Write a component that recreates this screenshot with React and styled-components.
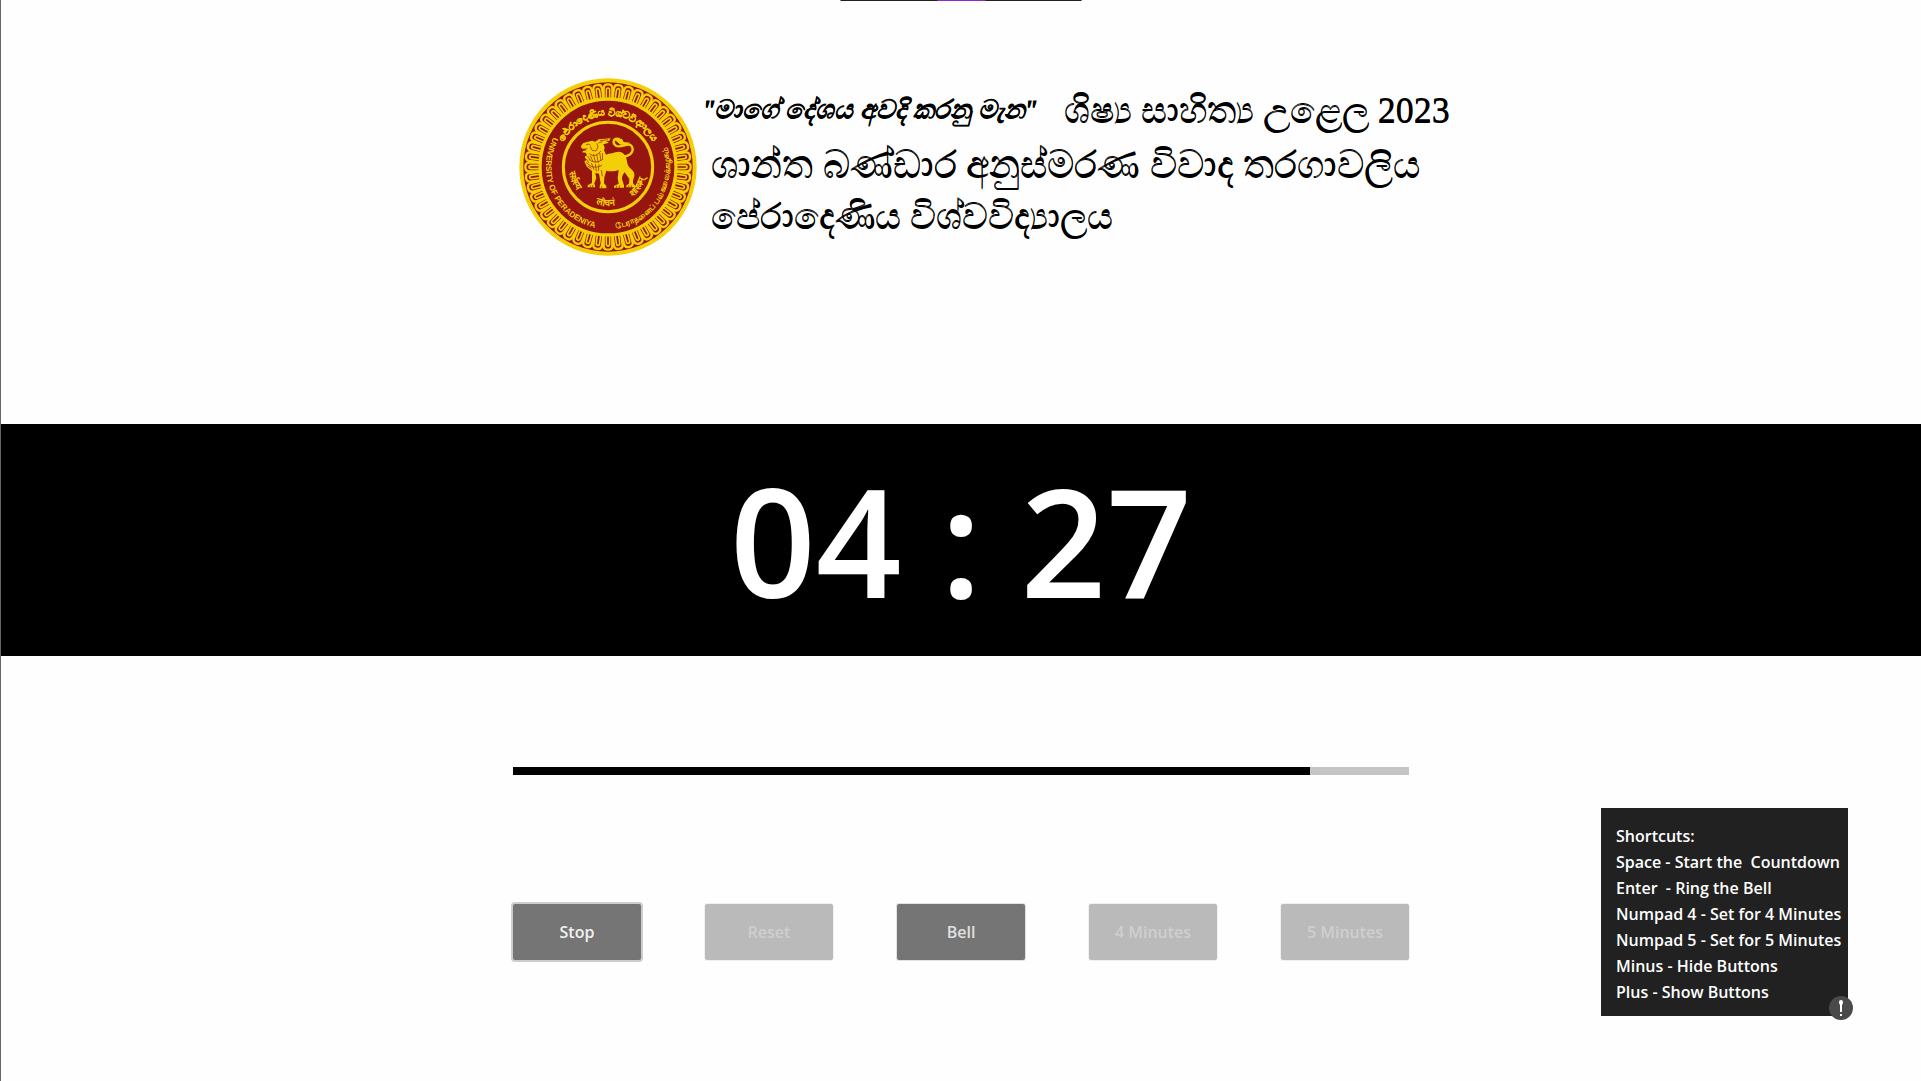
import React from "react";
import styled, { createGlobalStyle } from "styled-components";

const YELLOW = "#f4cf08";
const RED = "#96150f";

const GlobalStyle = createGlobalStyle`
  *, *::before, *::after { box-sizing: border-box; }
  body {
    margin: 0;
    background: #fefefe;
    font-family: "Open Sans", "Noto Sans", sans-serif;
  }
`;

const Page = styled.main`
  position: relative;
  display: flex;
  flex-direction: column;
  min-height: 100vh;
  border-left: 1px solid #666;
  overflow-x: hidden;
`;

const TopStrip = styled.div`
  position: absolute;
  top: 0;
  left: 50%;
  display: flex;
  justify-content: center;
  width: 241px;
  height: 1px;
  transform: translateX(-50%);
  background: #212121;
`;

const StripHandle = styled.span`
  width: 48px;
  background: #8a2bd2;
`;

const Column = styled.div`
  width: 100%;
  max-width: 896px;
  margin: 0 auto;
`;

const Header = styled.header`
  min-height: 424px;
  padding-top: 76px;
`;

const Brand = styled(Column)`
  display: flex;
  gap: 4px;
  padding-left: 4px;
`;

const Emblem = styled.svg`
  flex: none;
  width: 182px;
  height: 182px;
`;

const Titles = styled.div`
  display: flex;
  flex-direction: column;
  padding-top: 6px;
  color: #000;
  font-family: "Liberation Serif", serif;
  white-space: nowrap;
`;

const TitleRow = styled.div`
  display: flex;
  gap: 28px;
  height: ${(p) => (p.$tall ? 56 : 52)}px;
  padding-left: ${(p) => (p.$indent ? 8 : 0)}px;
  line-height: ${(p) => (p.$tall ? 56 : 52)}px;
`;

const TitleText = styled.h1`
  margin: 0;
  font-size: ${(p) => p.$size}px;
  font-weight: 400;
  text-shadow: 0 1px 0 #000;
`;

const Motto = styled(TitleText)`
  font-style: italic;
  -webkit-text-stroke: 1px #000;
`;

const ClockBand = styled.section`
  display: flex;
  align-items: center;
  justify-content: center;
  min-height: 232px;
  background: #000;
`;

const Clock = styled.time`
  color: #fff;
  font-size: 150px;
  font-weight: 600;
  line-height: 208px;
  white-space: pre;
`;

const Controls = styled(Column)`
  display: flex;
  flex-direction: column;
  gap: 129px;
  padding: 111px 0 121px;
`;

const Track = styled.div`
  height: 8px;
  background: #c5c5c5;
`;

const Elapsed = styled.div`
  height: 100%;
  background: #000;
`;

const ButtonRow = styled.div`
  display: grid;
  grid-template-columns: repeat(5, 1fr);
  gap: 64px;
`;

const ActionButton = styled.button`
  height: 56px;
  padding: 0;
  border: 0;
  border-radius: 2px;
  background: #757575;
  box-shadow: 0 0 0 ${(p) => (p.$current ? "2px #cdcdcd" : "1px #e2e2e2")};
  color: ${(p) => (p.$current ? "#f2f2f2" : "#e0e0e0")};
  font: 600 16px/24px "Open Sans", "Noto Sans", sans-serif;

  &:disabled {
    background: #bababa;
    box-shadow: 0 0 0 1px #f0f0f0;
    color: #cfcfcf;
  }
`;

const ShortcutPanel = styled.aside`
  position: fixed;
  right: 73px;
  bottom: 65px;
  width: 247px;
  padding: 15px 0 11px 15px;
  background: #212121;
  color: #fff;
  font-size: 16px;
  font-weight: 600;
  line-height: 26px;
  white-space: pre;
`;

const ShortcutTitle = styled.h2`
  margin: 0;
  font: inherit;
`;

const ShortcutList = styled.ul`
  margin: 0;
  padding: 0;
  list-style: none;
`;

const InfoButton = styled.button`
  position: absolute;
  right: -5px;
  bottom: -4px;
  width: 24px;
  height: 24px;
  padding: 0;
  border: 0;
  border-radius: 50%;
  background: #4a4a4a;
`;

const InfoIcon = styled.svg`
  display: block;
  width: 24px;
  height: 24px;
`;

const PETALS = Array.from({ length: 48 }, (_, i) => i * 7.5);

function UniversityEmblem() {
  return (
    <Emblem viewBox="21 17 546 546" role="img" aria-label="University of Peradeniya">
      <defs>
        <path id="ringTop" d="M140 290A154 154 0 0 1 448 290" />
        <path id="ringOuter" d="M294 104A186 186 0 0 0 294 476A186 186 0 0 0 294 104" />
        <path id="ringInner" d="M294 173A117 117 0 0 0 294 407A117 117 0 0 0 294 173" />
      </defs>
      <circle cx="294" cy="290" r="266" fill={YELLOW} />
      <circle cx="294" cy="290" r="254" fill={RED} />
      <g fill="none" stroke={YELLOW} strokeLinecap="round">
        {PETALS.map((angle) => (
          <g key={angle} transform={`rotate(${angle} 294 290)`}>
            <path d="M281 82V54Q281 42 294 42Q307 42 307 54V82" strokeWidth="7" />
            <path d="M289 80V59Q289 53 294 53Q299 53 299 59V80" strokeWidth="5" />
          </g>
        ))}
      </g>
      <circle cx="294" cy="290" r="204" fill={RED} stroke={YELLOW} strokeWidth="10" />
      <circle cx="294" cy="290" r="134" fill="none" stroke={YELLOW} strokeWidth="9" />
      <g fill={YELLOW} fontWeight="700">
        <g stroke={YELLOW} strokeWidth="1">
          <text fontFamily="'Liberation Serif', serif" fontSize="29">
            <textPath href="#ringTop" startOffset="50%" textAnchor="middle">
              පේරාදෙණිය විශ්වවිද්‍යාලය
            </textPath>
          </text>
        </g>
        <text fontFamily="'Liberation Sans Narrow', 'Liberation Sans', sans-serif" fontSize="24">
          <textPath href="#ringOuter" startOffset="17%">UNIVERSITY OF PERADENIYA</textPath>
        </text>
        <text fontFamily="'Liberation Sans', sans-serif" fontSize="24">
          <textPath href="#ringOuter" startOffset="52%">பேராதனைப் பல்கலைக்கழகம்</textPath>
        </text>
        <g fontFamily="'Liberation Sans', sans-serif" fontSize="28">
          <text><textPath href="#ringInner" startOffset="27%">सर्वस्य</textPath></text>
          <text><textPath href="#ringInner" startOffset="45%">लोचनं</textPath></text>
          <text><textPath href="#ringInner" startOffset="61%">शास्त्रम्</textPath></text>
        </g>
      </g>
      <g transform="translate(186 180)">
        <g fill={YELLOW}>
          <path d="M29 44L34 38L48 34L60 31L70 34L80 27L116 24L112 31L102 33L111 37L94 42L98 52L96 60L102 73C112 69 121 70 130 66C142 61 155 66 161 78C166 90 164 101 172 111C180 120 189 124 187 137C185 146 181 153 184 161L190 166V171H163V165L171 160L172 146L158 126C152 132 148 142 151 150L156 165V172H126V167L140 160L137 143L140 119C129 124 114 124 103 121L97 141L96 159L103 167V174H83V168L86 158L81 130L70 128L73 143L67 159L70 171H47V165L60 158V122L45 110L37 94L43 88L38 80L45 74L41 67L30 66L34 61L44 60L38 55H30L27 49Z" />
        </g>
        <path d="M158 78C178 75 188 60 178 46C169 35 150 53 133 47C121 40 122 25 136 25C146 25 142 31 148 36" fill="none" stroke={YELLOW} strokeWidth="7" />
        <path d="M128 28L150 25L155 35L175 37L164 44L145 43Z" fill={YELLOW} />
        <g fill="none" stroke={RED} strokeWidth="2">
          <path d="M42 43L51 41L55 45M31 58L46 55M55 48L60 60L72 62L78 49L74 39M79 38L92 34M84 31L108 28" />
          <path d="M47 77L54 89M43 86L51 98M41 96L53 105M47 107L59 114M55 76L63 94M64 72L71 96M74 72L79 98M83 67L87 92M91 68L92 88M58 98L66 118M70 101L73 123M81 102L79 122M52 70Q69 84 87 62M52 88Q70 103 92 87M52 105Q69 116 90 105" />
          <path d="M88 119L91 138M55 165V171M62 164V171M89 168V174M134 166V172M142 165V172M170 165V171M178 165V171" />
        </g>
      </g>
    </Emblem>
  );
}

const ACTIONS = [
  { label: "Stop", current: true },
  { label: "Reset", disabled: true },
  { label: "Bell" },
  { label: "4 Minutes", disabled: true },
  { label: "5 Minutes", disabled: true },
];

const SHORTCUTS = [
  "Space - Start the  Countdown",
  "Enter  - Ring the Bell",
  "Numpad 4 - Set for 4 Minutes",
  "Numpad 5 - Set for 5 Minutes",
  "Minus - Hide Buttons",
  "Plus - Show Buttons",
];

export default function App() {
  const total = 300;
  const remaining = 267;
  return (
    <Page>
      <GlobalStyle />
      <TopStrip><StripHandle /></TopStrip>
      <Header>
        <Brand>
          <UniversityEmblem />
          <Titles>
            <TitleRow $tall>
              <Motto as="p" $size={26}>"මාගේ දේශය අවදි කරනු මැන"</Motto>
              <TitleText $size={36}>ශිෂ්‍ය සාහිත්‍ය උළෙල 2023</TitleText>
            </TitleRow>
            <TitleRow $indent>
              <TitleText as="h2" $size={38}>ශාන්ත බණ්ඩාර අනුස්මරණ විවාද තරගාවලිය</TitleText>
            </TitleRow>
            <TitleRow $indent>
              <TitleText as="h2" $size={36}>පේරාදෙණිය විශ්වවිද්‍යාලය</TitleText>
            </TitleRow>
          </Titles>
        </Brand>
      </Header>
      <ClockBand>
        <Clock>04 : 27</Clock>
      </ClockBand>
      <Controls>
        <Track role="progressbar" aria-label="Time remaining" aria-valuemin={0} aria-valuemax={total} aria-valuenow={remaining}>
          <Elapsed style={{ width: `${(remaining / total) * 100}%` }} />
        </Track>
        <ButtonRow>
          {ACTIONS.map((a) => (
            <ActionButton key={a.label} type="button" $current={a.current} disabled={a.disabled}>
              {a.label}
            </ActionButton>
          ))}
        </ButtonRow>
      </Controls>
      <ShortcutPanel>
        <ShortcutTitle>Shortcuts:</ShortcutTitle>
        <ShortcutList>
          {SHORTCUTS.map((s) => <li key={s}>{s}</li>)}
        </ShortcutList>
        <InfoButton type="button" aria-label="Shortcuts">
          <InfoIcon viewBox="0 0 24 24" aria-hidden="true">
            <path d="M10 6Q10 4 12 4Q14 4 14 6Q14 8 13 9V16H11V9Q10 8 10 6ZM11 18H13V20H11Z" fill="#fff" />
          </InfoIcon>
        </InfoButton>
      </ShortcutPanel>
    </Page>
  );
}
